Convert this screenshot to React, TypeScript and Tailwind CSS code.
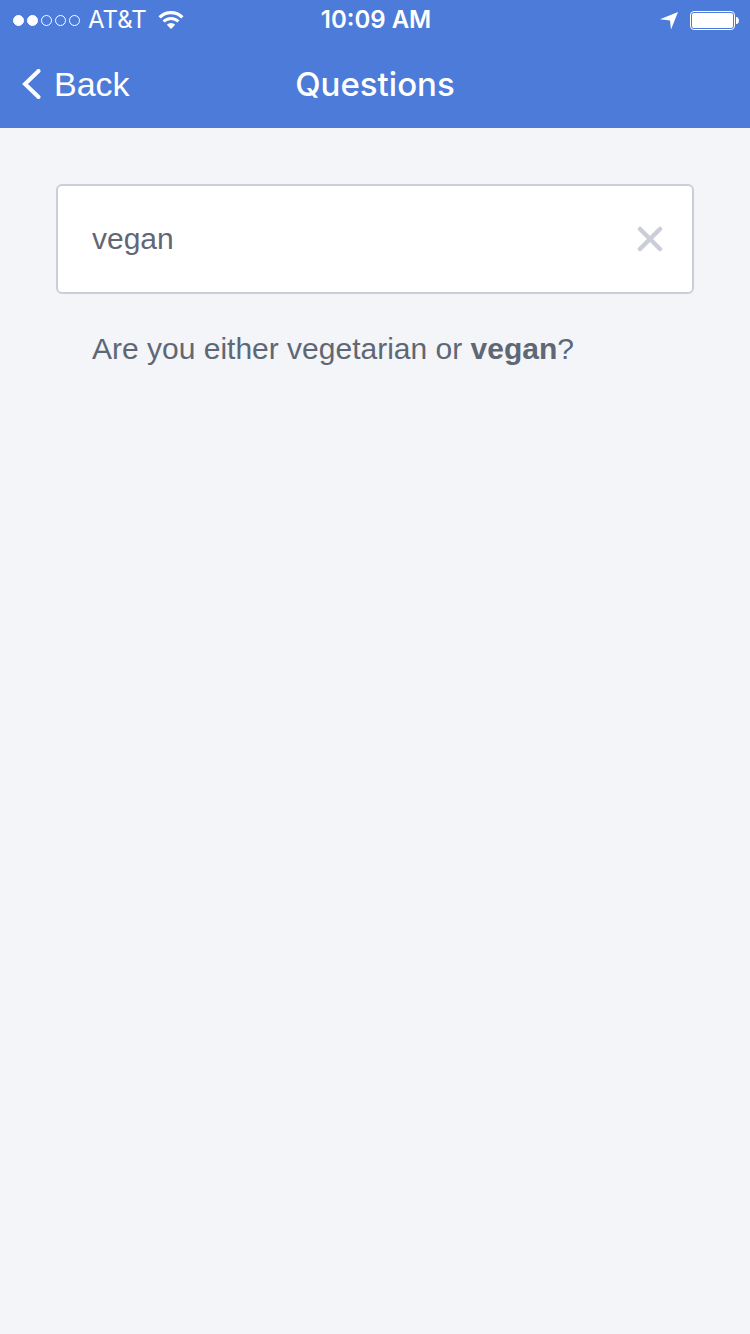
import { useState } from 'react';

const QUESTIONS = ['Are you either vegetarian or vegan?'];

function SignalDots({ strength }: { strength: number }) {
    return (
        <div className="flex gap-[3px]" role="img" aria-label="Signal strength">
            {[1, 2, 3, 4, 5].map((dot) => (
                <span key={dot} className={`h-[11px] w-[11px] rounded-full border border-white ${dot <= strength ? 'bg-white' : ''}`} />
            ))}
        </div>
    );
}

function WifiIcon() {
    return (
        <svg className="h-[18px] w-[26px]" viewBox="0 0 26 18" fill="none" aria-hidden="true">
            <path d="M1.6 6.4a16 16 0 0 1 22.8 0" stroke="white" strokeWidth="3.2" />
            <path d="M5.6 10.5a10.4 10.4 0 0 1 14.8 0" stroke="white" strokeWidth="3" />
            <path d="M13 18l-4.2-4.3a6 6 0 0 1 8.4 0z" fill="white" />
        </svg>
    );
}

function LocationIcon() {
    return (
        <svg className="h-5 w-[18px]" viewBox="0 0 18 20" fill="white" aria-hidden="true">
            <path d="M18 2L11 19.5 10 10.5 0 9.3z" />
        </svg>
    );
}

function BatteryIcon() {
    return (
        <svg className="h-[19px] w-[49px]" viewBox="0 0 49 19" fill="none" aria-hidden="true">
            <rect x="0.5" y="0.5" width="44" height="18" rx="3.5" stroke="white" />
            <rect x="2" y="2" width="41" height="15" rx="2" fill="white" />
            <path d="M46 6h1q2 1 2 3.5T47 13h-1z" fill="white" />
        </svg>
    );
}

function StatusBar() {
    return (
        <div className="grid h-10 grid-cols-[1fr_auto_1fr] items-center pr-[11px] pl-[13px] font-['Inter',sans-serif] text-2xl leading-10">
            <div className="flex items-center">
                <SignalDots strength={2} />
                <span className="mr-[11px] ml-2">AT&amp;T</span>
                <WifiIcon />
            </div>
            <time className="font-semibold">10:09 AM</time>
            <div className="flex items-center justify-end gap-3">
                <LocationIcon />
                <BatteryIcon />
            </div>
        </div>
    );
}

function NavBar() {
    return (
        <nav className="grid h-[88px] grid-cols-[1fr_auto_1fr] items-center px-[22px]">
            <button type="button" className="flex items-center gap-[13px] justify-self-start text-[34px] leading-10">
                <svg className="h-[30px] w-[19px]" viewBox="0 0 19 30" fill="none" aria-hidden="true">
                    <path d="M16.5 2L3 15l13.5 13" stroke="white" strokeWidth="4" strokeLinecap="round" />
                </svg>
                Back
            </button>
            <h1 className="font-['Inter',sans-serif] text-[33px] leading-10 font-medium">Questions</h1>
        </nav>
    );
}

function Highlighted({ text, term }: { text: string; term: string }) {
    const start = text.toLowerCase().indexOf(term.toLowerCase());
    return (
        <>
            {text.slice(0, start)}
            <strong className="font-bold">{text.slice(start, start + term.length)}</strong>
            {text.slice(start + term.length)}
        </>
    );
}

export default function App() {
    const [query, setQuery] = useState('vegan');
    const results = query ? QUESTIONS.filter((question) => question.toLowerCase().includes(query.toLowerCase())) : [];

    return (
        <div className="min-h-screen bg-[#f3f5f9] font-['Liberation_Sans',Arial,sans-serif] text-[#5f6775]">
            <header className="bg-[#4d7bd9] text-white">
                <StatusBar />
                <NavBar />
            </header>

            <main className="p-14">
                <div className="flex h-[110px] items-center rounded-md border-2 border-[#cbced8] bg-white pr-[29px] pl-[34px]">
                    <input
                        type="text"
                        aria-label="Search questions"
                        className="h-full min-w-0 flex-1 bg-transparent text-[30px] outline-none"
                        value={query}
                        onChange={(e) => setQuery(e.target.value)}
                    />
                    <button type="button" aria-label="Clear search" onClick={() => setQuery('')}>
                        <svg className="h-[26px] w-[26px]" viewBox="0 0 26 26" fill="none" aria-hidden="true">
                            <path d="M3 3l20 20M23 3L3 23" stroke="#cbced8" strokeWidth="4.5" strokeLinecap="round" />
                        </svg>
                    </button>
                </div>

                <ul className="mt-[35px] px-9 text-[30px] leading-10">
                    {results.map((question) => (
                        <li key={question}>
                            <Highlighted text={question} term={query} />
                        </li>
                    ))}
                </ul>
            </main>
        </div>
    );
}
